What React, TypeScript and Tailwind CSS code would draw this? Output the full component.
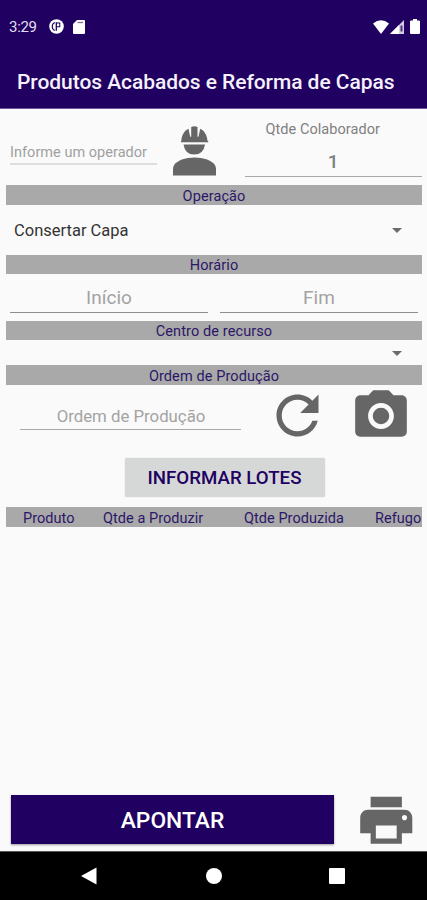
import type { ReactNode } from "react";

const Icon = ({ d, className }: { d: string; className: string }) => (
  <svg viewBox="0 0 24 24" fill="currentColor" className={`shrink-0 ${className}`}>
    <path d={d} />
  </svg>
);

const StatusBar = () => (
  <div className="flex h-[54px] items-center pl-[9px] pr-[6px] text-white">
    <span className="w-[39px] text-[15px] tracking-[-0.3px] text-[#e4dff0]">3:29</span>
    <svg viewBox="0 0 16 16" className="ml-[0.5px] mt-[-2px] size-[15px]">
      <circle cx="8" cy="8" r="7.8" fill="white" />
      <path d="M6.2 3.8a4.600 4.600 0 0 0 0 8.400" fill="none" stroke="#200061" strokeWidth="1.200" />
      <path d="M7.800 3.500v9" stroke="#200061" strokeWidth="1.400" />
      <path d="M8 4.200h3.500v4H8" fill="none" stroke="#200061" strokeWidth="1.100" />
    </svg>
    <svg viewBox="0 0 12 14" className="ml-[9.5px] mt-[-1px] h-[14px] w-[12px]">
      <path d="M4 0h7q1 0 1 1v12q0 1-1 1H1q-1 0-1-1V4z" fill="white" />
      <path d="M4.5 2.500h5.500" stroke="#7d6aa5" strokeWidth="1.300" />
    </svg>
    <div className="ml-auto mt-[-1px] flex items-center">
      <svg viewBox="0 0 16 14" className="h-[14px] w-[16px]">
        <path d="M0 3.5Q8-3 16 3.5L8 14z" fill="white" />
      </svg>
      <svg viewBox="0 0 14 14" className="ml-[1px] h-[14px] w-[14px]">
        <path d="M14 0v14H0z" fill="#d3cce2" />
        <path d="M9 5v9H0z" fill="white" />
        <path d="M10.5 5.5h2v6h-2z" fill="#47307a" />
      </svg>
      <svg viewBox="0 0 10 15" className="ml-[6px] mr-[1px] h-[15px] w-[10px]">
        <path d="M3 0h4v1.5h2q1 0 1 1V14q0 1-1 1H1q-1 0-1-1V2.5q0-1 1-1h2z" fill="white" />
      </svg>
    </div>
  </div>
);

const SectionTitle = ({ children }: { children: ReactNode }) => (
  <h2 className="ml-[6px] mr-[5px] flex h-[19.5px] shrink-0 items-center justify-center bg-[#a9a9a9] pt-[4px] text-[14.5px] tracking-[0.1px] text-[#2b1768]">
    {children}
  </h2>
);

const Caret = () => (
  <svg viewBox="0 0 10 5" className="ml-auto mr-[25px] mt-[2px] h-[5px] w-[10px] text-[#6b6b6b]">
    <path d="M0 0h10L5 5z" fill="currentColor" />
  </svg>
);

const Worker = () => (
  <svg viewBox="0 0 43 50" className="mt-[16.5px] h-[50px] w-[43px] shrink-0 text-[#666]">
    <g fill="currentColor">
      <path d="M8.5 14.5v-2q1.3-7.2 7-9.8l1.7 8h1V.9q3-1.3 6.3 0v9.8h1l1.7-8q5.7 2.6 7 9.8v2l1 .2v1.6H8v-1.6z" />
      <path d="M10.5 18.5H32q-1.5 10-10.8 10-9.2 0-10.7-10z" />
      <path d="M0 49.5v-7q1-8 15-10.5 6.5-1 13 0Q42 34.500 43 42.500v7z" />
    </g>
  </svg>
);

const App = () => {
  return (
    <div className="flex h-[900px] w-[427px] flex-col overflow-hidden whitespace-nowrap bg-[#fafafa] font-['Roboto',sans-serif]">
      <header className="h-[109px] shrink-0 border-b border-[#6a5793] bg-[#200061]">
        <StatusBar />
        <h1 className="flex h-[54px] items-center pl-[17px] pt-[3px] text-[21px] font-medium tracking-[-0.06px] text-[#f4f1fa]">
          Produtos Acabados e Reforma de Capas
        </h1>
      </header>

      <div className="flex h-[76px] shrink-0">
        <div className="ml-[10px] mt-[33px] h-[23px] w-[147px] border-b-2 border-[#dedede] text-[14.5px] leading-[21px] tracking-[0.03px] text-[#a0a0a0]">
          Informe um operador
        </div>
        <div className="ml-[15.5px]">
          <Worker />
        </div>
        <div className="ml-[29px] w-[177.5px] shrink-0 pt-[10px] text-center text-[#808080]">
          <div className="h-[21px] pr-[21px] text-[14.5px] leading-[22px] tracking-[0.05px]">Qtde Colaborador</div>
          <div className="mt-[10px] h-[27px] border-b border-[#a9a9a9] text-[19px] font-medium leading-[24px]">1</div>
        </div>
      </div>

      <SectionTitle>Operação</SectionTitle>
      <div className="flex h-[50px] shrink-0 items-center pl-[14px] text-[16.5px] text-[#333]">
        <span className="pt-[3px]">Consertar Capa</span>
        <Caret />
      </div>

      <SectionTitle>Horário</SectionTitle>
      <div className="flex h-[46.5px] shrink-0 gap-[12px] pl-[10px] pt-[10px] text-center text-[19px] leading-[28px] text-[#a3a3a3]">
        <div className="box-content h-[28px] w-[198px] border-b border-[#8d8d8d]">Início</div>
        <div className="box-content h-[28px] w-[198px] border-b border-[#8d8d8d]">Fim</div>
      </div>

      <SectionTitle>Centro de recurso</SectionTitle>
      <div className="flex h-[25px] shrink-0 items-center">
        <Caret />
      </div>

      <SectionTitle>Ordem de Produção</SectionTitle>
      <div className="flex h-[73.5px] shrink-0 items-start">
        <div className="ml-[20px] mt-[17.5px] h-[27.5px] w-[221px] border-b border-[#a9a9a9] pl-px text-center text-[16.8px] leading-[29px] text-[#a3a3a3]">
          Ordem de Produção
        </div>
        <Icon
          className="-mt-px ml-[25px] size-[63px] text-[#666]"
          d="M17.65 6.35C16.2 4.9 14.21 4 12 4c-4.42 0-7.99 3.58-7.99 8s3.57 8 7.99 8c3.73 0 6.84-2.55 7.73-6h-2.08c-.82 2.33-3.04 4-5.65 4-3.31 0-6-2.69-6-6s2.69-6 6-6c1.66 0 3.14.69 4.22 1.78L13 11h7V4l-2.35 2.35z"
        />
        <Icon
          className="ml-[21px] size-[62px] text-[#666]"
          d="M12 8.8a3.2 3.2 0 1 0 0 6.4a3.2 3.2 0 1 0 0-6.4zM9 2L7.17 4H4c-1.1 0-2 .9-2 2v12c0 1.1.9 2 2 2h16c1.1 0 2-.9 2-2V6c0-1.1-.9-2-2-2h-3.17L15 2H9zm3 15c-2.76 0-5-2.24-5-5s2.24-5 5-5 5 2.24 5 5-2.24 5-5 5z"
        />
      </div>

      <button className="ml-[124.5px] flex h-[39px] w-[200px] shrink-0 items-center justify-center rounded-[2px] bg-[#d6d8d8] pt-[2px] text-[18.7px] font-medium text-[#200061] shadow-[0_0_1px_#bbb]">
        INFORMAR LOTES
      </button>

      <div className="ml-[6px] mr-[5px] mt-[10px] flex h-[19.5px] shrink-0 items-center bg-[#a9a9a9] pt-[4px] text-[14.5px] tracking-[0.04px] text-[#2b1768]">
        <span className="w-[80px] pl-[17px]">Produto</span>
        <span className="w-[141px] pl-[17px]">Qtde a Produzir</span>
        <span className="w-[131px] pl-[17px]">Qtde Produzida</span>
        <span className="pl-[17px]">Refugo</span>
      </div>

      <div className="mt-auto flex h-[63px] shrink-0">
        <button className="ml-[11px] mt-[7px] h-[49px] w-[323px] bg-[#200061] pt-[4px] text-[22.8px] font-medium text-white shadow-[0_1px_2px_#999]">
          APONTAR
        </button>
        <Icon
          className="ml-[21px] mt-[0.5px] size-[62.5px] text-[#666]"
          d="M19 8H5c-1.66 0-3 1.34-3 3v6h4v4h12v-4h4v-6c0-1.66-1.34-3-3-3zm-3 11H8v-5h8v5zm3-7c-.55 0-1-.45-1-1s.45-1 1-1 1 .45 1 1-.45 1-1 1zm-1-9H6v4h12V3z"
        />
      </div>

      <nav className="flex h-[49px] shrink-0 items-center border-t border-[#555] bg-black text-white">
        <svg viewBox="0 0 16 18" className="ml-[81px] h-[18px] w-[16px]">
          <path d="M15.5.5v17L0 9z" fill="currentColor" />
        </svg>
        <div className="ml-[109px] size-[16px] rounded-full bg-white" />
        <div className="ml-[107px] size-[16px] rounded-[1px] bg-white" />
      </nav>
    </div>
  );
};

export default App;
